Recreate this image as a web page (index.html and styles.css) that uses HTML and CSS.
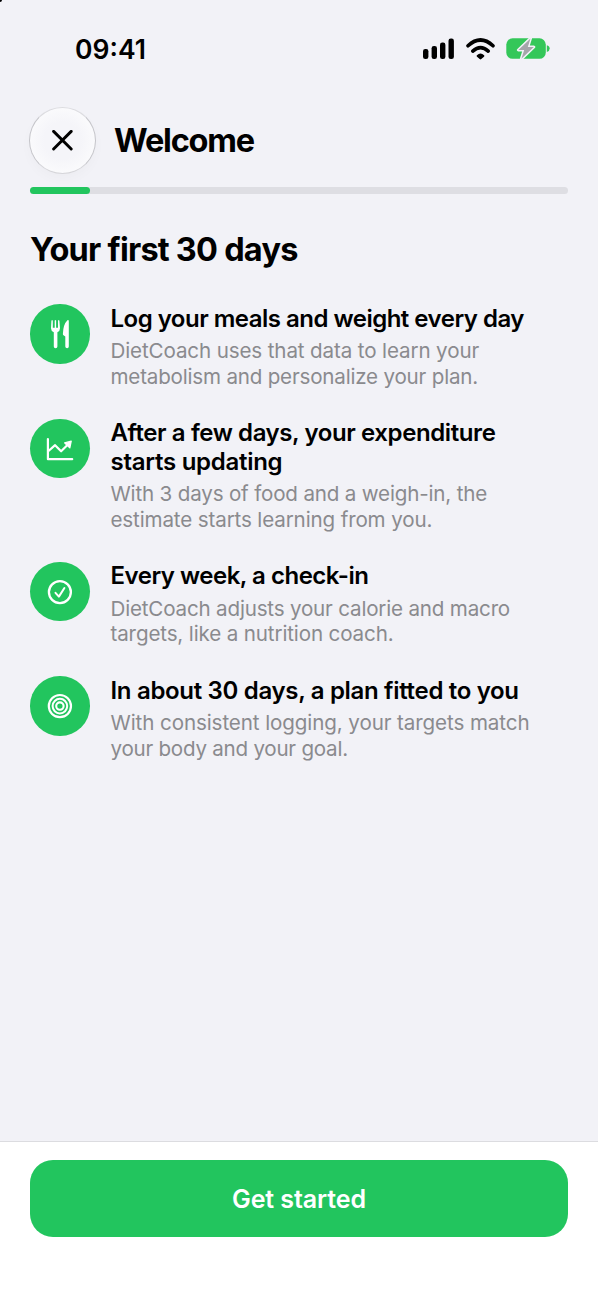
FILE: index.html
```html
<!DOCTYPE html>
<html lang="en">
<head>
<meta charset="utf-8">
<title>Welcome</title>
<link rel="stylesheet" href="styles.css">
</head>
<body>
<div class="screen">
  <div class="corner"></div>
  <div class="status">
    <span class="time">09:41</span>
    <svg class="signal" width="32" height="22" viewBox="0 0 32 22"><rect x="0" y="11" width="5.4" height="10" rx="2.3"/><rect x="8.6" y="8" width="5.4" height="13" rx="2.3"/><rect x="17" y="4.5" width="5.4" height="16.5" rx="2.3"/><rect x="25.5" y="0.5" width="5.4" height="20.5" rx="2.3"/></svg>
    <svg class="wifi" width="29" height="22" viewBox="0 0 29 22"><path d="M2 7.8Q14.5-3.8 27 7.8M6.8 13.1Q14.5 6.2 22.2 13.1" fill="none" stroke="#000" stroke-width="3.6" stroke-linecap="round"/><path d="M10.9 17.2Q14.5 13.8 18.1 17.2Q18.8 18 18 18.7L15.3 21.1Q14.5 21.7 13.7 21.1L11 18.7Q10.2 18 10.9 17.2Z"/></svg>
    <svg class="battery" width="44" height="22" viewBox="0 0 44 22"><rect x="0.3" y="0.3" width="39.5" height="20.5" rx="6.3" fill="#34c759"/><path d="M40.8 7.2Q43.7 8 43.7 10.6T40.8 14.1Z" fill="#34c759"/><path class="bolt" d="M24.5 0.4L12.4 12H18.2L15.4 20.8L27.8 9H21.8Z"/></svg>
  </div>
  <header class="header">
    <button class="close" aria-label="Close"><svg width="21" height="21" viewBox="0 0 21 21"><path d="M1.6 1.4L19.2 19M19.2 1.4L1.6 19" stroke="#000" stroke-width="2.9" stroke-linecap="round"/></svg></button>
    <h1 class="title">Welcome</h1>
  </header>
  <div class="progress"><div class="progress-value"></div></div>
  <main class="content">
    <h2 class="heading">Your first 30 days</h2>
    <ul class="steps">
      <li class="step">
        <div class="badge"><svg width="60" height="60" viewBox="0 0 60 60" fill="#fff"><path d="M21.4 16.7Q22.2 15.5 22.8 16.7V23.8H24.7V16.6Q25.4 15.5 26.1 16.6V23.8H28V16.7Q28.7 15.5 29.4 16.7L30 24.2Q30 27 27.4 28.2V42.5Q27.4 44.2 25.6 44.2T23.8 42.5V28.2Q21 27 21 24.2Z"/><path d="M38.8 17.3V42.5Q38.8 44.2 37.1 44.2T35.3 42.5V32.5L33.5 31.2Q32.8 30.7 32.9 29.7Q33.2 20.5 37.4 16.3Q38.8 15.6 38.8 17.3Z"/></svg></div>
        <div class="copy"><h3 class="step-title t1">Log your meals and weight every day</h3><p class="desc"><span class="d1">DietCoach uses that data to learn your</span><br><span class="d2">metabolism and personalize your plan.</span></p></div>
      </li>
      <li class="step">
        <div class="badge"><svg width="60" height="60" viewBox="0 0 60 60" fill="none" stroke="#fff" stroke-width="2.2" stroke-linecap="round" stroke-linejoin="round"><path d="M17.9 20V40.2H42.2M18.5 32L25.1 26.2L31.1 32.3L38.5 25"/><path d="M34.6 23.9L41.2 22.2L39.8 28.9Z" fill="#fff" stroke-width="1.3"/></svg></div>
        <div class="copy"><h3 class="step-title"><span class="t2">After a few days, your expenditure</span><br><span class="t3">starts updating</span></h3><p class="desc"><span class="d3">With 3 days of food and a weigh-in, the</span><br><span class="d4">estimate starts learning from you.</span></p></div>
      </li>
      <li class="step">
        <div class="badge"><svg width="60" height="60" viewBox="0 0 60 60" fill="none" stroke="#fff" stroke-linecap="round" stroke-linejoin="round"><circle cx="29.9" cy="30.1" r="11" stroke-width="2.3"/><path d="M25.5 30.8L28.9 34.6L34.4 26" stroke-width="2"/></svg></div>
        <div class="copy"><h3 class="step-title t4">Every week, a check-in</h3><p class="desc"><span class="d5">DietCoach adjusts your calorie and macro</span><br><span class="d6">targets, like a nutrition coach.</span></p></div>
      </li>
      <li class="step">
        <div class="badge"><svg width="60" height="60" viewBox="0 0 60 60" fill="none" stroke="#fff"><circle cx="29.9" cy="30.1" r="11.1" stroke-width="2.2"/><circle cx="29.9" cy="30.1" r="7.3" stroke-width="2"/><circle cx="29.9" cy="30.1" r="3.7" stroke-width="2.1"/></svg></div>
        <div class="copy"><h3 class="step-title t5">In about 30 days, a plan fitted to you</h3><p class="desc"><span class="d7">With consistent logging, your targets match</span><br><span class="d8">your body and your goal.</span></p></div>
      </li>
    </ul>
  </main>
  <footer class="footer"><button class="start">Get started</button></footer>
</div>
</body>
</html>
```
FILE: styles.css
```css
* { box-sizing: border-box; margin: 0; padding: 0; }
body { background: #f2f2f7; color: #000; font-family: Inter, "Liberation Sans", sans-serif; }
button { border: 0; font: inherit; }
.screen { position: relative; width: 598px; height: 1300px; display: flex; flex-direction: column; overflow: hidden; }
.corner { position: absolute; top: 0; left: 0; width: 2px; height: 2px; background: #000; border-bottom-right-radius: 2px; }
.status { height: 97px; padding: 0 48px 0 75px; display: flex; align-items: center; flex-shrink: 0; }
.time { font-size: 26.5px; font-weight: 600; letter-spacing: 0; flex: 1; }
.signal { margin-right: 10.5px; }
.wifi { margin-right: 11.5px; }
.bolt { fill: #a5a5aa; stroke: #f2f2f7; stroke-width: 3px; stroke-linejoin: round; paint-order: stroke; }
.header { height: 86px; padding: 10px 29px; display: flex; align-items: flex-start; gap: 18px; flex-shrink: 0; }
.close { width: 67px; height: 67px; border-radius: 50%; background: radial-gradient(circle, #f5f5f9 40%, #fafafc 70%); border: 1px solid #c4c4c9; border-top-color: #dcdce0; border-bottom-color: #d6d6da; box-shadow: 0 5px 12px rgba(0,0,0,.025); display: grid; place-items: center; flex-shrink: 0; }
.title { font-size: 32.5px; line-height: 67px; font-weight: 700; letter-spacing: -1.2px; }
.progress { margin: 4px 30px 0; height: 7px; border-radius: 4px; background: #dedee3; flex-shrink: 0; }
.progress-value { width: 60px; height: 7px; border-radius: 4px; background: #22c55e; }
.content { flex: 1; padding: 32px 30px 0; }
.heading { font-size: 32.5px; line-height: 48px; font-weight: 700; letter-spacing: -0.77px; white-space: nowrap; }
.steps { list-style: none; margin-top: 30px; display: flex; flex-direction: column; gap: 29.3px; }
.step { display: flex; gap: 21px; }
.badge { width: 59.5px; height: 59.5px; border-radius: 50%; background: #22c55e; flex-shrink: 0; }
.badge svg { display: block; }
.copy { padding-top: 0.8px; white-space: nowrap; }
.step-title { font-size: 24px; line-height: 28.6px; font-weight: 600; letter-spacing: -0.4px; }
.desc { margin-top: 5px; font-size: 20.6px; line-height: 25.4px; color: #8a8a8e; }
.t1 { letter-spacing: -0.51px; }
.t3 { letter-spacing: -0.27px; }
.t4 { letter-spacing: -0.49px; }
.t5 { letter-spacing: -0.32px; }
.d1 { letter-spacing: -0.13px; }
.d2 { letter-spacing: -0.2px; }
.d3 { letter-spacing: -0.18px; }
.d4 { letter-spacing: -0.14px; }
.d5 { letter-spacing: -0.19px; }
.d6 { letter-spacing: -0.14px; }
.d7 { letter-spacing: -0.1px; }
.d8 { letter-spacing: -0.25px; }
.footer { height: 159px; background: #fff; border-top: 1px solid #dcdce0; padding: 18px 30px 0; flex-shrink: 0; }
.start { display: block; width: 100%; height: 77px; border-radius: 23px; background: #22c55e; color: #fff; font-size: 25px; font-weight: 600; letter-spacing: -0.1px; }
```
